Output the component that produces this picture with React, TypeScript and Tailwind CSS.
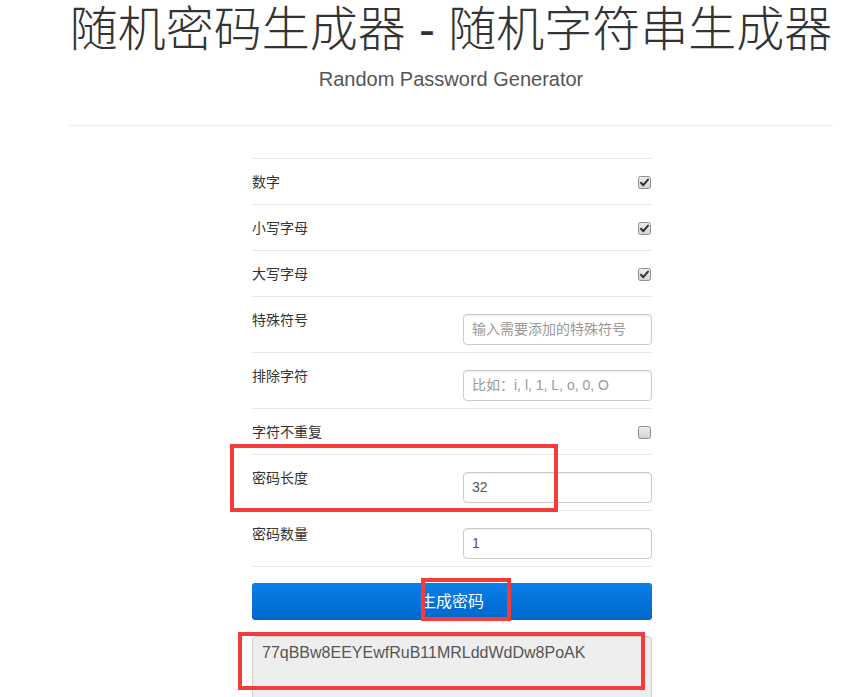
import React from "react";

const FONT = { fontFamily: '"Liberation Sans", "Noto Sans CJK SC", sans-serif' };

function Check({ checked }: { checked: boolean }) {
  return (
    <svg width="13" height="13" viewBox="0 0 13 13" className="block">
      <defs>
        <linearGradient id={checked ? "cbg1" : "cbg0"} x1="0" y1="0" x2="0" y2="1">
          <stop offset="0" stopColor="#ededed" />
          <stop offset="1" stopColor="#d4d4d4" />
        </linearGradient>
      </defs>
      <rect x="0.5" y="0.5" width="12" height="12" rx="2" fill={`url(#${checked ? "cbg1" : "cbg0"})`} stroke="#8e8e8e" />
      {checked && (
        <path d="M3 6.8 L5.3 9.2 L10 3.6" fill="none" stroke="#333" strokeWidth="2" strokeLinecap="round" strokeLinejoin="round" />
      )}
    </svg>
  );
}

function CheckRow({ label, checked }: { label: string; checked: boolean }) {
  return (
    <div className="box-border h-[46px] border-t border-[#e6e6e6] pt-[13px] flex items-start justify-between">
      <span className="text-[14px] leading-[20px] text-[#333]">{label}</span>
      <span className="mt-[4px] mr-[1px]">
        <Check checked={checked} />
      </span>
    </div>
  );
}

function InputRow({ label, placeholder, value }: { label: string; placeholder?: string; value?: string }) {
  return (
    <div className="box-border h-[56px] border-t border-[#e6e6e6] pt-[13px] flex items-start justify-between">
      <span className="text-[14px] leading-[20px] text-[#333]">{label}</span>
      <div className="mt-[4px] box-border w-[189px] h-[31px] border border-[#ccc] rounded-[4px] bg-white shadow-[inset_0_1px_1px_rgba(0,0,0,0.075)] pl-[8px] flex items-center">
        {value ? (
          <span className="text-[14px] text-[#555]">{value}</span>
        ) : (
          <span className="text-[14px] text-[#999]">{placeholder}</span>
        )}
      </div>
    </div>
  );
}

export default function App() {
  return (
    <div className="relative w-[844px] h-[697px] overflow-hidden bg-white" style={FONT}>
      <div className="ml-[68px] w-[766px]">
        <h1 className="pt-[2px] text-center whitespace-nowrap text-[48px] leading-[56px] font-light text-[#333]">
          随机密码生成器 - 随机字符串生成器
        </h1>
        <p className="mt-[7px] text-center text-[20px] leading-[28px] text-[#555]">Random Password Generator</p>
        <div className="mt-[32px] border-t border-[#eee]" />
        <div className="ml-[184px] w-[400px] mt-[32px]">
          <CheckRow label="数字" checked />
          <CheckRow label="小写字母" checked />
          <CheckRow label="大写字母" checked />
          <InputRow label="特殊符号" placeholder="输入需要添加的特殊符号" />
          <InputRow label="排除字符" placeholder="比如：i, l, 1, L, o, 0, O" />
          <CheckRow label="字符不重复" checked={false} />
          <InputRow label="密码长度" value="32" />
          <div className="border-b border-[#e6e6e6]">
            <InputRow label="密码数量" value="1" />
          </div>
          <button className="mt-[16px] w-[400px] h-[37px] rounded-[3px] bg-gradient-to-b from-[#0b7fe9] to-[#0067cd] text-white text-[16px] flex items-center justify-center">
            生成密码
          </button>
          <div className="mt-[16px] box-border h-[90px] border border-[#ccc] rounded-[4px] bg-[#eee] px-[9px] pt-[5px] text-[16px] leading-[22px] text-[#555]">
            77qBBw8EEYEwfRuB11MRLddWdDw8PoAK
          </div>
        </div>
      </div>

      <div className="absolute left-[230px] top-[444px] w-[328px] h-[68px] border-4 border-[#f63b3b]" />
      <div className="absolute left-[421px] top-[578px] w-[90px] h-[43px] border-4 border-[#f63b3b]" />
      <div className="absolute left-[238px] top-[632px] w-[407px] h-[58px] border-4 border-[#f63b3b]" />
    </div>
  );
}
